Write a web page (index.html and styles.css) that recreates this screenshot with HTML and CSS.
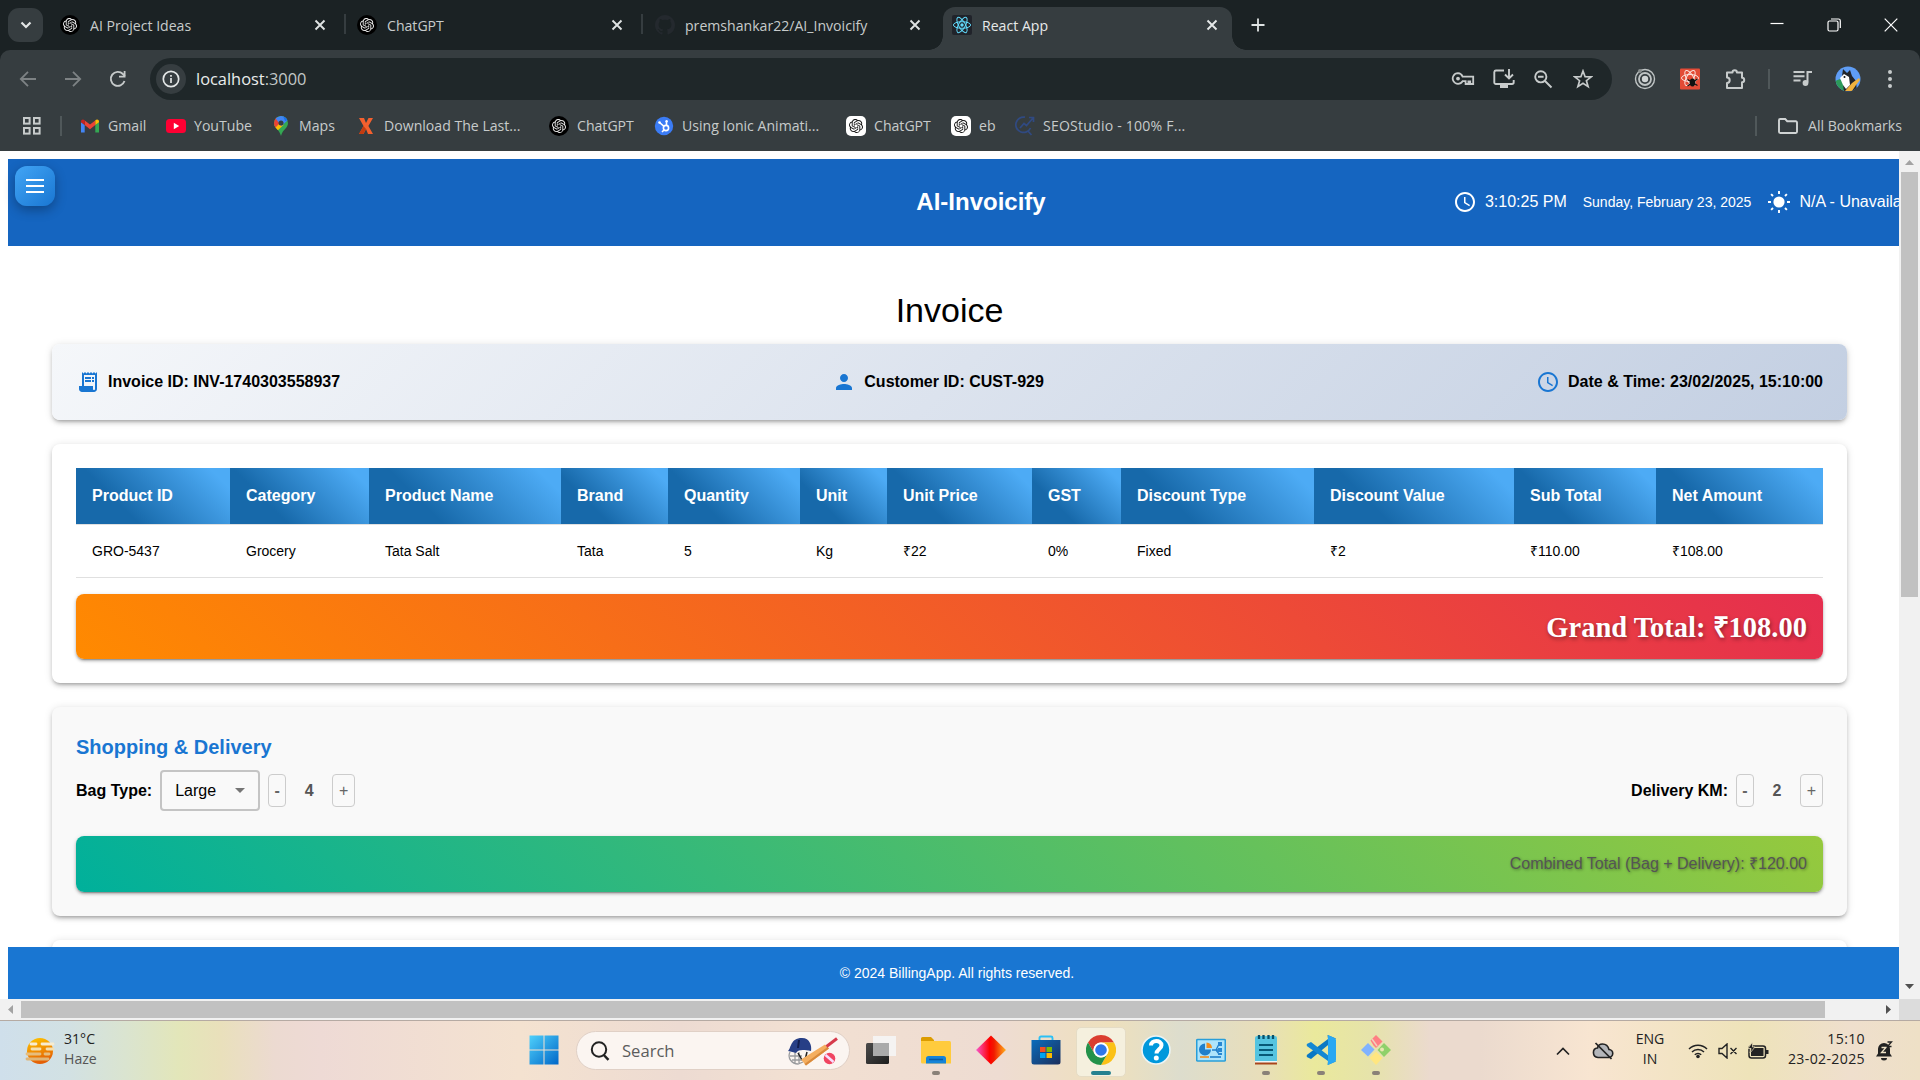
FILE: index.html
```html
<!DOCTYPE html>
<html lang="en">
<head>
<meta charset="utf-8">
<title>React App</title>
<link rel="stylesheet" href="styles.css">
</head>
<body>
<svg class="sprite" width="0" height="0" aria-hidden="true">
  <defs>
    <symbol id="gpt" viewBox="0 0 24 24"><path d="M22.2819 9.8211a5.9847 5.9847 0 0 0-.5157-4.9108 6.0462 6.0462 0 0 0-6.5098-2.9A6.0651 6.0651 0 0 0 4.9807 4.1818a5.9847 5.9847 0 0 0-3.9977 2.9 6.0462 6.0462 0 0 0 .7427 7.0966 5.98 5.98 0 0 0 .511 4.9107 6.051 6.051 0 0 0 6.5146 2.9001A5.9847 5.9847 0 0 0 13.2599 24a6.0557 6.0557 0 0 0 5.7718-4.2058 5.9894 5.9894 0 0 0 3.9977-2.9001 6.0557 6.0557 0 0 0-.7475-7.0729zm-9.022 12.6081a4.4755 4.4755 0 0 1-2.8764-1.0408l.1419-.0804 4.7783-2.7582a.7948.7948 0 0 0 .3927-.6813v-6.7369l2.02 1.1686a.071.071 0 0 1 .038.052v5.5826a4.504 4.504 0 0 1-4.4945 4.4944zm-9.6607-4.1254a4.4708 4.4708 0 0 1-.5346-3.0137l.142.0852 4.783 2.7582a.7712.7712 0 0 0 .7806 0l5.8428-3.3685v2.3324a.0804.0804 0 0 1-.0332.0615L9.74 19.9502a4.4992 4.4992 0 0 1-6.1408-1.6464zM2.3408 7.8956a4.485 4.485 0 0 1 2.3655-1.9728V11.6a.7664.7664 0 0 0 .3879.6765l5.8144 3.3543-2.0201 1.1685a.0757.0757 0 0 1-.071 0l-4.8303-2.7865A4.504 4.504 0 0 1 2.3408 7.872zm16.5963 3.8558L13.1038 8.364 15.1192 7.2a.0757.0757 0 0 1 .071 0l4.8303 2.7913a4.4944 4.4944 0 0 1-.6765 8.1042v-5.6772a.79.79 0 0 0-.407-.667zm2.0107-3.0231l-.142-.0852-4.7735-2.7818a.7759.7759 0 0 0-.7854 0L9.409 9.2297V6.8974a.0662.0662 0 0 1 .0284-.0615l4.8303-2.7866a4.4992 4.4992 0 0 1 6.6802 4.66zM8.3065 12.863l-2.02-1.1638a.0804.0804 0 0 1-.038-.0567V6.0742a4.4992 4.4992 0 0 1 7.3757-3.4537l-.142.0805L8.704 5.459a.7948.7948 0 0 0-.3927.6813zm1.0976-2.3654l2.602-1.4998 2.6069 1.4998v2.9994l-2.5974 1.4997-2.6067-1.4997Z"/></symbol>
    <symbol id="gpt-dark" viewBox="0 0 20 20"><circle cx="10" cy="10" r="10" fill="#000"/><use href="#gpt" x="3" y="3" width="14" height="14" fill="#eee"/></symbol>
    <symbol id="gpt-light" viewBox="0 0 20 20"><rect width="20" height="20" rx="5" fill="#fff"/><use href="#gpt" x="3" y="3" width="14" height="14" fill="#111"/></symbol>
    <symbol id="close" viewBox="0 0 12 12"><path d="M1.5 1.5l9 9M10.5 1.5l-9 9" stroke="currentColor" stroke-width="1.9" fill="none"/></symbol>
    <symbol id="clock" viewBox="0 0 24 24"><path fill="currentColor" d="M11.99 2C6.47 2 2 6.48 2 12s4.47 10 9.99 10C17.52 22 22 17.52 22 12S17.52 2 11.99 2zM12 20c-4.42 0-8-3.58-8-8s3.58-8 8-8 8 3.58 8 8-3.58 8-8 8zm.5-13H11v6l5.25 3.15.75-1.23-4.5-2.67z"/></symbol>
  </defs>
</svg>

<div class="browser">
  <div class="tabstrip">
    <button class="tab-search"><svg width="14" height="14" viewBox="0 0 14 14"><path d="M2.500 4.500l4.500 4.500 4.500-4.500" fill="none" stroke="#e3e6e6" stroke-width="2.200"/></svg></button>
    <div class="tab"><svg width="20" height="20"><use href="#gpt-dark"/></svg><span class="tab-title">AI Project Ideas</span><svg class="tab-close" width="12" height="12"><use href="#close"/></svg></div>
    <div class="tab ruled"><svg width="20" height="20"><use href="#gpt-dark"/></svg><span class="tab-title">ChatGPT</span><svg class="tab-close" width="12" height="12"><use href="#close"/></svg></div>
    <div class="tab ruled github"><svg width="20" height="20" viewBox="0 0 16 16"><path fill="#24292e" d="M8 0C3.58 0 0 3.58 0 8c0 3.54 2.29 6.53 5.47 7.59.4.07.55-.17.55-.38 0-.19-.01-.82-.01-1.49-2.01.37-2.53-.49-2.69-.94-.09-.23-.48-.94-.82-1.13-.28-.15-.68-.52-.01-.53.63-.01 1.08.58 1.23.82.72 1.21 1.87.87 2.33.66.07-.52.28-.87.51-1.07-1.78-.2-3.64-.89-3.64-3.95 0-.87.31-1.59.82-2.15-.08-.2-.36-1.02.08-2.12 0 0 .67-.21 2.2.82.64-.18 1.32-.27 2-.27s1.36.09 2 .27c1.53-1.04 2.2-.82 2.2-.82.44 1.1.16 1.92.08 2.12.51.56.82 1.27.82 2.15 0 3.07-1.87 3.75-3.65 3.95.29.25.54.73.54 1.48 0 1.07-.01 1.93-.01 2.2 0 .21.15.46.55.38A8.01 8.01 0 0 0 16 8c0-4.42-3.58-8-8-8z"/></svg><span class="tab-title">premshankar22/AI_Invoicify</span><svg class="tab-close" width="12" height="12"><use href="#close"/></svg></div>
    <div class="tab active"><svg width="20" height="20" viewBox="0 0 20 20"><rect width="20" height="20" rx="2" fill="#20232a"/><g fill="none" stroke="#61dafb" stroke-width="1"><ellipse cx="10" cy="10" rx="8.600" ry="3.300"/><ellipse cx="10" cy="10" rx="8.600" ry="3.300" transform="rotate(60 10 10)"/><ellipse cx="10" cy="10" rx="8.600" ry="3.300" transform="rotate(120 10 10)"/></g><circle cx="10" cy="10" r="1.700" fill="#61dafb"/></svg><span class="tab-title">React App</span><svg class="tab-close" width="12" height="12"><use href="#close"/></svg></div>
    <svg class="new-tab" width="14" height="14" viewBox="0 0 14 14"><path d="M7 .5v13M.5 7h13" stroke="#dfe3e3" stroke-width="1.800"/></svg>
    <div class="window-controls">
      <svg width="14" height="14" viewBox="0 0 14 14"><path d="M.5 5.500h13" stroke="#fff" stroke-width="1.200"/></svg>
      <svg width="14" height="14" viewBox="0 0 14 14"><rect x="1" y="3" width="10" height="10" rx="1.500" fill="none" stroke="#fff" stroke-width="1.200"/><path d="M4 1h7.500a1.800 1.800 0 0 1 1.800 1.800V10" fill="none" stroke="#fff" stroke-width="1.200"/></svg>
      <svg width="14" height="14" viewBox="0 0 14 14"><path d="M.7.7l12.600 12.600M13.300.7L.7 13.300" stroke="#fff" stroke-width="1.200"/></svg>
    </div>
  </div>

  <div class="toolbar">
    <svg class="dim" width="18" height="18" viewBox="0 0 18 18"><path d="M17 9H2M9 1.800L1.800 9 9 16.200" fill="none" stroke="currentColor" stroke-width="1.800"/></svg>
    <svg class="dim" width="18" height="18" viewBox="0 0 18 18"><path d="M1 9h15M9 1.800L16.200 9 9 16.200" fill="none" stroke="currentColor" stroke-width="1.800"/></svg>
    <svg width="18" height="18" viewBox="0 0 18 18"><path d="M15.500 11a7 7 0 1 1-1.600-7l2 2" fill="none" stroke="currentColor" stroke-width="1.900"/><path d="M16.500 1v6.500H10V5.700h4.700V1z" fill="currentColor"/></svg>
    <div class="omnibox">
      <span class="site-info"><svg width="18" height="18" viewBox="0 0 18 18"><circle cx="9" cy="9" r="7.700" fill="none" stroke="currentColor" stroke-width="1.700"/><path d="M9 8v5M9 5v1.700" stroke="currentColor" stroke-width="1.700"/></svg></span>
      <span class="url">localhost<span class="port">:3000</span></span>
      <span class="omni-icons">
        <svg width="24" height="16" viewBox="0 0 24 16"><path d="M7 2.200a5.300 5.300 0 1 0 4.600 8h3v2.800h2.800v-2.600h1.800V13h3V5.600H11.600A5.300 5.300 0 0 0 7 2.200z" fill="none" stroke="currentColor" stroke-width="1.800"/><circle cx="7" cy="7.600" r="1.900" fill="currentColor"/></svg>
        <svg width="24" height="22" viewBox="0 0 24 22"><path d="M12 2.500H4A1.700 1.700 0 0 0 2.300 4v10.500A1.500 1.500 0 0 0 4 16h16a1.700 1.700 0 0 0 1.700-1.700V12" fill="none" stroke="currentColor" stroke-width="1.900"/><path d="M8 16h8v4H8z" fill="currentColor"/><path d="M17 1v9M13 6.500l4 4 4-4" fill="none" stroke="currentColor" stroke-width="1.900"/></svg>
        <svg class="zoom-out" width="20" height="20" viewBox="0 0 20 20"><circle cx="7.800" cy="7.800" r="5.600" fill="none" stroke="currentColor" stroke-width="1.900"/><path d="M12 12l6.500 6.500M5 7.800h5.600" stroke="currentColor" stroke-width="1.900"/></svg>
        <svg width="20" height="20" viewBox="0 0 20 20"><path d="M10 2l2.100 5.700 6 .2-4.700 3.800 1.700 5.900L10 14.200l-5.100 3.400 1.700-5.900L1.900 7.900l6-.2z" fill="none" stroke="currentColor" stroke-width="1.700"/></svg>
      </span>
    </div>
    <div class="extensions">
      <svg width="22" height="22" viewBox="0 0 22 22"><g fill="none" stroke="#bfc4c4"><circle cx="11" cy="11" r="9.500" stroke-width="1.400"/><circle cx="11" cy="11" r="6" stroke-width="1.800"/></g><circle cx="11" cy="11" r="3.200" fill="#d0d4d4"/><circle cx="6" cy="3" r="2" fill="#8a8f8f"/></svg>
      <svg width="22" height="22" viewBox="0 0 22 22"><rect x="1" y=".5" width="20" height="21" rx="1" fill="#e34b36"/><g fill="none" stroke="#fbe3df" stroke-width="1"><ellipse cx="11" cy="10" rx="8.500" ry="3.500"/><ellipse cx="11" cy="10" rx="8.500" ry="3.500" transform="rotate(60 11 10)"/><ellipse cx="11" cy="10" rx="8.500" ry="3.500" transform="rotate(120 11 10)"/></g><ellipse cx="13.500" cy="14.500" rx="2.800" ry="4" fill="#111"/><path d="M8.500 11.500l10 6M18.500 11l-10 7" stroke="#111" stroke-width="1.200"/></svg>
      <svg width="22" height="22" viewBox="0 0 22 22"><path d="M3 4.500h5.500a2.200 2.200 0 0 1 4.400 0H18v5.300a2.200 2.200 0 0 1 0 4.400V20H3v-5a2.700 2.700 0 0 0 0-5.400z" fill="none" stroke="currentColor" stroke-width="2" stroke-linejoin="round"/></svg>
      <span class="rule"></span>
      <svg width="22" height="20" viewBox="0 0 22 20"><path d="M1.500 3h11M1.500 7.300h11M1.500 11.600h7" stroke="currentColor" stroke-width="2"/><path d="M20 3h-4.500v10.500" fill="none" stroke="currentColor" stroke-width="2"/><circle cx="13.500" cy="14" r="2.900" fill="currentColor"/></svg>
      <svg class="avatar" width="26" height="26" viewBox="0 0 26 26"><defs><clipPath id="av"><circle cx="13" cy="13" r="12.500"/></clipPath></defs><g clip-path="url(#av)"><path fill="#5f9df5" d="M0 0h26v26H0z"/><path fill="#2c9a5a" d="M0 15l5-2 4 4v9H0z"/><path fill="#23262b" d="M7 10l1-7 4 4 3-3 2 6 4 5 1 11H9z"/><path fill="#fff" d="M5 12l4-4 5 3 1 8-4 4-3-4z"/><path fill="#f0b23e" d="M24 12l-7 5-7 8h7l4-6 4-5z"/><circle cx="9.500" cy="11" r="1" fill="#111"/></g></svg>
      <svg width="6" height="20" viewBox="0 0 6 20"><g fill="currentColor"><circle cx="3" cy="3" r="2"/><circle cx="3" cy="10" r="2"/><circle cx="3" cy="17" r="2"/></g></svg>
    </div>
  </div>

  <div class="bookmarks">
    <svg class="apps" width="18" height="18" viewBox="0 0 18 18"><g fill="none" stroke="#c7cbcb" stroke-width="2"><rect x="1" y="1" width="5.600" height="5.600"/><rect x="11" y="1" width="5.600" height="5.600"/><rect x="1" y="11" width="5.600" height="5.600"/><rect x="11" y="11" width="5.600" height="5.600"/></g></svg>
    <span class="rule"></span>
    <div class="bookmark-list">
      <span class="bookmark"><svg width="20" height="20" viewBox="0 0 20 20"><path fill="#4285f4" d="M1 6v10.500h3.700V9z"/><path fill="#34a853" d="M19 6v10.500h-3.700V9z"/><path fill="#ea4335" d="M4.700 4.500L10 8.600l5.300-4.100V9L10 13.200 4.700 9z"/><path fill="#c5221f" d="M1 5.500C1 3.300 3.300 2.900 4.700 4.300V9L1 6.300z"/><path fill="#fbbc04" d="M19 5.500c0-2.200-2.300-2.600-3.700-1.200V9L19 6.300z"/></svg>Gmail</span>
      <span class="bookmark"><svg width="20" height="20" viewBox="0 0 20 20"><rect y="3" width="20" height="14" rx="3.500" fill="#f03"/><path fill="#fff" d="M7.800 6.800v6.400l5.400-3.200z"/></svg>YouTube</span>
      <span class="bookmark"><svg width="20" height="20" viewBox="0 0 20 20"><defs><clipPath id="pin"><path d="M10 0a7 7 0 0 0-7 7c0 5.500 5.300 6 7 13 1.700-7 7-7.500 7-13a7 7 0 0 0-7-7z"/></clipPath></defs><g clip-path="url(#pin)"><path fill="#34a853" d="M0 0h20v20H0z"/><path fill="#fbbc04" d="M0 13l8.500-9 4 5L5 16z"/><path fill="#ea4335" d="M0 0h5l5 6-8 8z"/><path fill="#4285f4" d="M4.500 2L9 0h5l3 4-6.500 6L5 3z"/><path fill="#1a73e8" d="M12 0h5v4l-3 1z"/></g><circle cx="10" cy="7" r="2.500" fill="#363d40"/></svg>Maps</span>
      <span class="bookmark"><svg width="20" height="20" viewBox="0 0 20 20"><path fill="#f4602e" d="M3 2h5l2 5 2.500-5H17l-4.600 8L17 18h-5l-2-5-2.500 5H3l4.500-8z"/><path fill="#c23b10" d="M7.500 10L3 18h4.500l2.500-5z"/></svg>Download The Last...</span>
      <span class="bookmark"><svg width="20" height="20"><use href="#gpt-dark"/></svg>ChatGPT</span>
      <span class="bookmark"><svg width="20" height="20" viewBox="0 0 20 20"><circle cx="10" cy="10" r="9.200" fill="#3b7cf5"/><g fill="none" stroke="#fff" stroke-width="1.600"><circle cx="12" cy="12" r="2.600"/><path d="M12.500 9V5.500M10 10.300L5.500 6.500M10 14l-2 2"/></g><circle cx="5.500" cy="6.500" r="1.300" fill="#fff"/><circle cx="12.600" cy="5.300" r="1.200" fill="#fff"/></svg>Using Ionic Animati...</span>
      <span class="bookmark"><svg width="20" height="20"><use href="#gpt-light"/></svg>ChatGPT</span>
      <span class="bookmark"><svg width="20" height="20"><use href="#gpt-light"/></svg>eb</span>
      <span class="bookmark seo"><svg width="20" height="20" viewBox="0 0 20 20"><g fill="none" stroke="#304a82" stroke-width="1.700"><path d="M10 1.200A7.700 7.700 0 1 0 15.500 12M12.500 14.500l4 4.500M5 12l4-4.500 2.500 2L18 2M14 1.500h4.500V6"/></g></svg>SEOStudio - 100% F...</span>
    </div>
    <span class="rule end"></span>
    <span class="bookmark all"><svg width="22" height="20" viewBox="0 0 22 20"><path d="M2 4.200A1.200 1.200 0 0 1 3.200 3h5l2 2.200h8.600A1.200 1.200 0 0 1 20 6.400v9.400a1.200 1.200 0 0 1-1.200 1.200H3.200A1.200 1.200 0 0 1 2 15.800z" fill="none" stroke="#d0d4d4" stroke-width="1.900"/></svg>All Bookmarks</span>
  </div>
</div>

<div class="viewport">
  <div class="page">
    <button class="menu-button"><svg width="18" height="14" viewBox="0 0 18 14"><path d="M0 1h18M0 7h18M0 13h18" stroke="#fff" stroke-width="2"/></svg></button>
    <div class="scroll-area">
      <header class="app-header">
        <h1 class="app-title">AI-Invoicify</h1>
        <div class="status">
          <svg width="24" height="24"><use href="#clock"/></svg>
          <span class="time">3:10:25 PM</span>
          <span class="date">Sunday, February 23, 2025</span>
          <svg width="24" height="24" viewBox="0 0 24 24"><circle cx="12" cy="12" r="5.600" fill="#fff"/><g stroke="#fff" stroke-width="1.900"><path d="M12 1v3M12 20v3M1 12h3M20 12h3M4.100 4.100l1.900 1.900M18 18l1.900 1.900M4.100 19.900L6 18M18 6l1.900-1.900"/></g></svg>
          <span class="weather">N/A - Unavailable</span>
        </div>
      </header>
      <main class="content">
        <h2 class="page-title">Invoice</h2>

        <section class="card meta">
          <span class="meta-item"><svg width="24" height="24" viewBox="0 0 24 24"><path fill="currentColor" d="M19.500 3.500L18 2l-1.500 1.500L15 2l-1.500 1.500L12 2l-1.500 1.500L9 2 7.500 3.500 6 2v14H3v3c0 1.660 1.340 3 3 3h12c1.660 0 3-1.340 3-3V2l-1.500 1.500zM19 19c0 .55-.45 1-1 1s-1-.45-1-1v-3H8V5h11v14z"/><path fill="currentColor" d="M9 7h6v2H9zM16 7h2v2h-2zM9 10h6v2H9zM16 10h2v2h-2z"/></svg>Invoice ID: INV-1740303558937</span>
          <span class="meta-item"><svg width="24" height="24" viewBox="0 0 24 24"><path fill="currentColor" d="M12 12c2.210 0 4-1.790 4-4s-1.790-4-4-4-4 1.790-4 4 1.790 4 4 4zm0 2c-2.670 0-8 1.340-8 4v2h16v-2c0-2.660-5.330-4-8-4z"/></svg>Customer ID: CUST-929</span>
          <span class="meta-item"><svg width="24" height="24"><use href="#clock"/></svg>Date &amp; Time: 23/02/2025, 15:10:00</span>
        </section>

        <section class="card products">
          <table>
            <thead><tr><th>Product ID</th><th>Category</th><th>Product Name</th><th>Brand</th><th>Quantity</th><th>Unit</th><th>Unit Price</th><th>GST</th><th>Discount Type</th><th>Discount Value</th><th>Sub Total</th><th>Net Amount</th></tr></thead>
            <tbody><tr><td>GRO-5437</td><td>Grocery</td><td>Tata Salt</td><td>Tata</td><td>5</td><td>Kg</td><td>₹22</td><td>0%</td><td>Fixed</td><td>₹2</td><td>₹110.00</td><td>₹108.00</td></tr></tbody>
          </table>
          <div class="banner grand-total">Grand Total: ₹108.00</div>
        </section>

        <section class="card delivery">
          <h3 class="section-title">Shopping &amp; Delivery</h3>
          <div class="controls">
            <div class="control-group">
              <span class="label">Bag Type:</span>
              <span class="select">Large<svg width="10" height="5" viewBox="0 0 10 5"><path d="M0 0h10L5 5z" fill="#757575"/></svg></span>
              <button class="step minus">-</button><span class="count">4</span><button class="step plus">+</button>
            </div>
            <div class="control-group">
              <span class="label">Delivery KM:</span>
              <button class="step minus">-</button><span class="count">2</span><button class="step plus">+</button>
            </div>
          </div>
          <div class="banner combined-total">Combined Total (Bag + Delivery): ₹120.00</div>
        </section>

        <section class="card next"></section>
      </main>
    </div>
    <footer class="app-footer">© 2024 BillingApp. All rights reserved.</footer>
  </div>
  <div class="vscroll">
    <svg width="9" height="5" viewBox="0 0 9 5"><path d="M0 5h9L4.500 0z" fill="#a3a3a3"/></svg>
    <span class="thumb"></span>
    <svg width="9" height="5" viewBox="0 0 9 5"><path d="M0 0h9L4.500 5z" fill="#505050"/></svg>
  </div>
  <div class="hscroll">
    <svg width="5" height="9" viewBox="0 0 5 9"><path d="M5 0v9L0 4.500z" fill="#a3a3a3"/></svg>
    <span class="thumb"></span>
    <svg width="5" height="9" viewBox="0 0 5 9"><path d="M0 0v9l5-4.500z" fill="#505050"/></svg>
  </div>
  <div class="corner"></div>
</div>

<div class="taskbar">
  <div class="weather-widget">
    <svg width="30" height="28" viewBox="0 0 30 28"><defs><linearGradient id="hz" x1="0" y1="0" x2=".3" y2="1"><stop offset="0" stop-color="#ffc800"/><stop offset="1" stop-color="#e45f06"/></linearGradient></defs><circle cx="15" cy="14" r="13" fill="url(#hz)"/><g stroke-width="2.800" stroke-linecap="round"><path d="M6 7h5M17 7h11" stroke="#f8ecd0"/><path d="M7 12h8M22 12h6" stroke="#f5dfae"/><path d="M2 17h13M20 17h4" stroke="#e6bd7e"/><path d="M2 22h21" stroke="#e0b577"/></g></svg>
    <span class="two-line"><span>31°C</span><span class="muted">Haze</span></span>
  </div>
  <div class="apps-row">
    <span class="app"><svg width="30" height="30" viewBox="0 0 30 30"><defs><linearGradient id="wn" x1="0" y1="0" x2="1" y2="1"><stop offset="0" stop-color="#4fd0fb"/><stop offset="1" stop-color="#0067c8"/></linearGradient></defs><path fill="url(#wn)" d="M.5.5h14v14H.5zM15.500.5h14v14h-14zM.5 15.500h14v14H.5zM15.500 15.500h14v14h-14z"/></svg></span>
    <div class="search">
      <svg width="20" height="20" viewBox="0 0 20 20"><circle cx="9" cy="8.500" r="7.200" fill="none" stroke="#222" stroke-width="2"/><path d="M13.800 14l4.700 4.800" stroke="#222" stroke-width="2.500"/></svg>
      <span>Search</span>
      <svg class="cricket" width="52" height="32" viewBox="0 0 52 32"><g fill="none" stroke="#999b9e" stroke-width="1.300"><path d="M3 17c-3 6 2 12 8 12l5-2M3 21h12M5 25h10M8 17v11M12 17v11"/></g><path fill="#273f86" d="M1 16C4 14 3 3 15 3c8 0 10 8 9 13-7-1-12-2-15 2-2-1-5-1-8-2z"/><path d="M12 5l-1 8" stroke="#111d4d" stroke-width="2"/><path d="M20 17l-2 8M11 18l4 7" stroke="#222" stroke-width="1.500"/><path d="M19 30.500l-5-6L38 9.500l4 4z" fill="#f4ae60"/><path d="M17.500 29L40.500 12l1.500 1.500-23 17z" fill="#d98a3c"/><path d="M39.500 11.500L50 3.500" stroke="#d63a4b" stroke-width="3"/><circle cx="42.500" cy="23.500" r="5.800" fill="#f04561"/><path d="M38.500 20l8 7" stroke="#f7dfff" stroke-width="2.500"/></svg>
    </div>
    <span class="app"><svg width="30" height="30" viewBox="0 0 30 30"><defs><linearGradient id="tv" x1="0" y1="0" x2="1" y2="1"><stop offset="0" stop-color="#4b4b4b"/><stop offset="1" stop-color="#1e1e1e"/></linearGradient></defs><rect y="8" width="23" height="21" rx="1.500" fill="url(#tv)"/><path d="M7 1h23v20H7z" fill="#f5f5f5" opacity=".9"/><path d="M7 8h16v13H7z" fill="#aaa"/></svg></span>
    <span class="app running"><svg width="30" height="30" viewBox="0 0 30 30"><path d="M0 3.500A1.500 1.500 0 0 1 1.500 2H10l3 3v4H0z" fill="#dc9c00"/><path d="M0 6h28.500A1.500 1.500 0 0 1 30 7.500V28.500H1.500A1.500 1.500 0 0 1 0 27z" fill="#ffcb3d"/><path d="M5 28.500v-5A2.500 2.500 0 0 1 7.500 21h15a2.500 2.500 0 0 1 2.500 2.500v5z" fill="#1684d8"/><path d="M8 24.500h14" stroke="#0b5aa2" stroke-width="1.500"/></svg></span>
    <span class="app"><svg width="30" height="30" viewBox="0 0 30 30"><defs><linearGradient id="dm"><stop offset="0" stop-color="#f65bd0"/><stop offset=".45" stop-color="#f00"/><stop offset=".6" stop-color="#f11b00"/><stop offset="1" stop-color="#ffb11c"/></linearGradient></defs><path d="M15 .5L30 15 15 29.500 0 15z" fill="url(#dm)"/></svg></span>
    <span class="app"><svg width="30" height="30" viewBox="0 0 30 30"><defs><linearGradient id="st" x1="0" y1="0" x2="1" y2="1"><stop offset="0" stop-color="#0b6dbd"/><stop offset="1" stop-color="#1c2f5c"/></linearGradient></defs><path d="M8.500 7V3A1.500 1.500 0 0 1 10 1.500h10A1.500 1.500 0 0 1 21.500 3v4" fill="none" stroke="#2cc0f5" stroke-width="1.900"/><path d="M.5 5h29v22a2.500 2.500 0 0 1-2.500 2.500H3A2.500 2.500 0 0 1 .5 27z" fill="url(#st)"/><path fill="#f25022" d="M9 12h5.500v5H9z"/><path fill="#7fba00" d="M15.500 12H21v5h-5.500z"/><path fill="#00a4ef" d="M9 18h5.500v5H9z"/><path fill="#ffb900" d="M15.500 18H21v5h-5.500z"/></svg></span>
    <span class="app current"><svg width="30" height="30" viewBox="0 0 48 48"><path fill="#db3d2f" d="M24 0a24 24 0 0 1 20.800 12H24a12 12 0 0 0-10.400 18L3.200 12A24 24 0 0 1 24 0z"/><path fill="#fbc116" d="M44.800 12A24 24 0 0 1 24 48l10.400-18A12 12 0 0 0 24 12z"/><path fill="#23924a" d="M3.200 12A24 24 0 0 0 24 48l10.400-18a12 12 0 0 1-20.800 0z"/><circle cx="24" cy="24" r="12" fill="#fff"/><circle cx="24" cy="24" r="9.300" fill="#2f77ea"/></svg></span>
    <span class="app"><svg width="30" height="30" viewBox="0 0 30 30"><circle cx="15" cy="15" r="14" fill="#0098dc" stroke="#ecf4f5" stroke-width="1.600"/><path d="M10 10.500c0-6 10.500-6 10.500-.2 0 4-5 4-5 8.200" fill="none" stroke="#fff" stroke-width="4"/><circle cx="15.300" cy="23" r="2.500" fill="#fff"/></svg></span>
    <span class="app"><svg width="30" height="30" viewBox="0 0 30 30"><rect x=".7" y="4.500" width="28.600" height="21.500" rx="1" fill="#aee4fb" stroke="#299ed9" stroke-width="1.600"/><path d="M9 8.500a6 6 0 1 0 6 6H9z" fill="#1f7fcb"/><path d="M10.500 7.500v5.500H16a5.500 5.500 0 0 0-5.500-5.500z" fill="#f28c1c"/><path d="M16 15h4l3-6M20 15l4 0M20 15l3 4" fill="none" stroke="#1f7fcb" stroke-width="1.300"/><path d="M22 7h4v4h-4zM22 13h4v4h-4zM22 18h4v2h-4z" fill="#2887d2"/><path d="M4 22h9" stroke="#f28c1c" stroke-width="1.600"/><path d="M14 22h11" stroke="#1f7fcb" stroke-width="1.600"/></svg></span>
    <span class="app running"><svg width="30" height="30" viewBox="0 0 30 30"><path fill="#a8461a" d="M4 26h22v3.500H4z"/><path fill="#eef5f6" d="M4 24h22v3.500H4z"/><path fill="#55c4e0" d="M4 3a2 2 0 0 1 2-2h18a2 2 0 0 1 2 2v23H4z"/><path d="M8 10h14M8 15h14M8 20h14" stroke="#075a78" stroke-width="1.900"/><path d="M8 0v4M12.500 0v4M17.500 0v4M22 0v4" stroke="#07506b" stroke-width="2.300"/></svg></span>
    <span class="app running"><svg width="30" height="30" viewBox="0 0 30 30"><path fill="#0a78c4" d="M21.500 0L30 3.500 5 24 .8 22v-2L22 4z"/><path fill="#1588d3" d="M21.500 30L30 26.500 5 7 .8 9v2L22 26z"/><path fill="#29a8f2" d="M22 0l6.500 3A2.500 2.500 0 0 1 30 5.300v19.400a2.500 2.500 0 0 1-1.500 2.300L22 30z"/></svg></span>
    <span class="app running"><svg width="30" height="30" viewBox="0 0 30 30"><path fill="#ff7f83" d="M15 0l6.500 6.500L15 13l-2.500-2.500-3-5z"/><path fill="#80b3ff" d="M7 8l6.500 6.500L7 21.500 0 15z"/><path fill="#8fd16a" d="M23 8l7 7-7 7-6.500-7z"/><path fill="#ffe680" d="M15 16.500l6.500 6.500L15 30l-6.500-7z"/><circle cx="21" cy="14.500" r="2" fill="#e9e7b0"/><path d="M11 4l5 7" stroke="#f1cfbc" stroke-width="1.500"/></svg></span>
  </div>
  <div class="tray">
    <svg class="chevron" width="14" height="10" viewBox="0 0 14 10"><path d="M1 8.500l6-6 6 6" fill="none" stroke="#222" stroke-width="1.700"/></svg>
    <svg class="cloud" width="22" height="18" viewBox="0 0 22 18"><path d="M6 15.500h10.500a4 4 0 0 0 .5-8C16 3.500 13 2 10.500 2 8 2 6 3.500 5.500 6 0 6.500 0 15 6 15.500z" fill="#b4b6ba" stroke="#222" stroke-width="1.600"/><path d="M3.500 1l16 16" stroke="#222" stroke-width="1.700"/></svg>
    <span class="two-line lang"><span>ENG</span><span>IN</span></span>
    <svg class="wifi" width="20" height="16" viewBox="0 0 20 16"><g fill="none" stroke="#222" stroke-width="1.500"><path d="M1 6a12.700 12.700 0 0 1 18 0M4 9a8.500 8.500 0 0 1 12 0M6.800 11.800a4.500 4.500 0 0 1 6.400 0"/></g><circle cx="10" cy="13.500" r="1.800" fill="#222"/></svg>
    <svg class="mute" width="20" height="16" viewBox="0 0 20 16"><path d="M1 5.500v5h3L9 15V1L4 5.500zM12.500 5l6 6M18.500 5l-6 6" fill="none" stroke="#222" stroke-width="1.400"/></svg>
    <svg class="battery" width="21" height="18" viewBox="0 0 21 18"><rect x="1" y="4" width="16.500" height="12" rx="2.500" fill="none" stroke="#222" stroke-width="1.500"/><rect x="3" y="6" width="12.500" height="8" fill="#222"/><path d="M18 8h2.500v4H18z" fill="#222"/><path d="M4.500 0L0 6.500h3l-1 4.500 5-6H4.500z" fill="#222" stroke="#f0e4be" stroke-width=".7"/></svg>
    <span class="two-line clock-text"><span>15:10</span><span>23-02-2025</span></span>
    <svg class="bell" width="18" height="20" viewBox="0 0 18 20"><path d="M1 15.500l2-3V8a6 6 0 0 1 12 0v4.500l2 3zM6 17h6a3 2.500 0 0 1-6 0z" fill="#222"/><path d="M6.500 6.500h4.500l-4.500 5h4.500" fill="none" stroke="#efe3c8" stroke-width="1.300"/><path d="M12.500 1h4l-4 4.500h4" fill="none" stroke="#222" stroke-width="1.300"/></svg>
  </div>
</div>
</body>
</html>
```

FILE: styles.css
```css
* { box-sizing: border-box; }

body {
  margin: 0;
  width: 1920px;
  height: 1080px;
  overflow: hidden;
  display: flex;
  flex-direction: column;
  background: #fff;
  font-family: "Liberation Sans", Arial, sans-serif;
  color: #000;
}

svg { display: block; flex: none; }
h1, h2, h3 { margin: 0; }
button { font: inherit; padding: 0; }
.sprite { position: absolute; }

/* Browser frame */
.browser {
  flex: none;
  height: 151px;
  background: #1b2224;
  color: #c7cbcb;
  font-family: "Open Sans", "Noto Sans", sans-serif;
  font-size: 14.1px;
  white-space: nowrap;
}
.tabstrip { display: flex; height: 50px; padding-left: 8px; }
.tab-search {
  width: 35px; height: 34px; margin: 8px 5px 0 0;
  border: 0; border-radius: 11px; background: #363d40;
  display: flex; align-items: center; justify-content: center;
}
.tab {
  width: 297px; height: 50px; padding: 0 19px 0 12px;
  display: flex; align-items: center; position: relative;
}
.tab-title { flex: 1; margin-left: 10px; color: #c7cbcb; }
.tab-close { color: #dfe3e3; }
.ruled::before {
  content: ""; position: absolute; left: -1px; top: 14px;
  width: 2px; height: 20px; background: #363d40;
}
.github { width: 298px; padding-left: 13px; }
.tab.active {
  width: 289px; height: 43px; margin: 7px 0 0 3px; padding: 0 14px 7px 9px;
  background: #363d40; border-radius: 12px 12px 0 0;
}
.tab.active::before, .tab.active::after {
  content: ""; position: absolute; bottom: 0; width: 14px; height: 14px;
}
.tab.active::before { left: -14px; background: radial-gradient(circle at 0 0, transparent 13.5px, #363d40 14px); }
.tab.active::after { right: -14px; background: radial-gradient(circle at 100% 0, transparent 13.5px, #363d40 14px); }
.tab.active .tab-title, .tab.active .tab-close { color: #e6e9e9; }
.new-tab { margin: 18px 0 0 19px; }
.window-controls { margin: 18px 22px 0 auto; display: flex; gap: 43px; }

.toolbar {
  display: flex; align-items: center; height: 58px; padding: 0 24px 0 19px;
  background: #363d40; border-radius: 10px 10px 0 0; color: #c7cbcb;
}
.toolbar > svg { margin-right: 27px; }
.toolbar .dim { color: #7d8284; }
.omnibox {
  width: 1462px; height: 42px; margin-left: -4px; padding: 0 19px 0 6px;
  display: flex; align-items: center; border-radius: 21px; background: #1f2729;
}
.site-info {
  width: 30px; height: 30px; border-radius: 50%; background: #363d40; color: #e3e6e6;
  display: flex; align-items: center; justify-content: center;
}
.url { margin-left: 10px; font-size: 16.4px; line-height: 20px; padding-bottom: 1px; color: #e9ecec; }
.port { color: #c2c7c7; }
.omni-icons { margin-left: auto; display: flex; align-items: center; gap: 17px; }
.zoom-out { margin-right: 3px; }
.extensions { flex: 1; display: flex; align-items: center; margin-left: 22px; gap: 23px; }
.extensions .rule { margin: 0 -1px; }
.avatar { margin: 0 3px 0 -2px; }
.rule { width: 2px; height: 20px; background: #50585a; }

.bookmarks {
  display: flex; align-items: center; height: 43px; padding: 0 18px 8px 23px;
  background: #363d40;
}
.bookmarks > .rule { margin: 0 18px 0 19px; }
.bookmarks > .rule.end { margin: 0 20px 0 auto; }
.bookmark-list { display: grid; grid-template-columns: 86px 105px 85px 193px 105px 192px 105px 64px auto; }
.bookmark { display: flex; align-items: center; gap: 8px; }
.bookmark.all { gap: 9px; }
.seo { letter-spacing: .2px; }

/* Page viewport */
.viewport {
  flex: none; height: 869px;
  display: grid; grid-template: 848px 21px / 1899px 21px;
}
.page { position: relative; padding-left: 8px; display: flex; flex-direction: column; overflow: hidden; }
.scroll-area { flex: 1; min-height: 0; margin-left: -8px; padding: 8px 0 0 8px; overflow: hidden; }
.menu-button {
  position: absolute; z-index: 2; left: 15px; top: 15px; width: 40px; height: 40px;
  border: 0; border-radius: 12px; background: linear-gradient(135deg, #42a5f5, #1976d2);
  box-shadow: 0 4px 12px rgba(0, 0, 0, .3);
  display: flex; align-items: center; justify-content: center;
}
.app-header {
  width: 1946px; height: 87px; padding-bottom: 2px; background: #1565c0; color: #fff;
  display: grid; grid-template-columns: minmax(0, 1fr) auto minmax(0, 1fr); align-items: center;
}
.app-title { grid-column: 2; font-size: 24px; }
.status { justify-self: end; display: flex; align-items: center; padding-right: 31px; white-space: nowrap; }
.time { margin: 0 16px 0 8px; }
.date { margin-right: 16px; font-size: 14px; }
.weather { margin-left: 8px; }

.content { padding: 42px 52px 0 44px; display: flex; flex-direction: column; }
.page-title { height: 56px; line-height: 44px; font-size: 34px; font-weight: 400; text-align: center; }
.card {
  padding: 24px; margin-bottom: 24px; border-radius: 8px; background: #fff;
  box-shadow: 0 3px 3px -2px rgba(0, 0, 0, .2), 0 3px 4px rgba(0, 0, 0, .14), 0 1px 8px rgba(0, 0, 0, .12);
}
.meta {
  height: 76px; display: flex; justify-content: space-between; align-items: center;
  background: linear-gradient(135deg, #f5f7fa, #c3cfe2); font-weight: 700;
}
.meta-item { display: flex; align-items: center; gap: 8px; }
.meta-item svg { color: #1976d2; }

.products { height: 239px; }
table { width: 1747px; table-layout: fixed; border-collapse: separate; border-spacing: 0; text-align: left; }
th, td { padding: 0 16px; border-bottom: 1px solid #e0e0e0; }
th { height: 57px; font-size: 16px; color: #fff; background: linear-gradient(45deg, #1769aa 30%, #4dabf5 90%); background-clip: padding-box; }
td { height: 53px; padding-bottom: 1px; font-size: 14px; }
th:nth-child(1) { width: 154px; }
th:nth-child(2) { width: 139px; }
th:nth-child(3) { width: 192px; }
th:nth-child(4) { width: 107px; }
th:nth-child(5) { width: 132px; }
th:nth-child(6) { width: 87px; }
th:nth-child(7) { width: 145px; }
th:nth-child(8) { width: 89px; }
th:nth-child(9) { width: 193px; }
th:nth-child(10) { width: 200px; }
th:nth-child(11) { width: 142px; }
th:nth-child(12) { width: 167px; }

.banner {
  display: flex; align-items: center; justify-content: flex-end; padding: 0 16px; border-radius: 8px;
  box-shadow: 0 2px 1px -1px rgba(0, 0, 0, .2), 0 2px 3px rgba(0, 0, 0, .24), 0 1px 5px rgba(0, 0, 0, .12);
}
.grand-total {
  height: 65px; margin-top: 16px; padding-bottom: 1px; background: linear-gradient(45deg, #ff8a00, #e52e4f);
  color: #fff; font: 700 28.5px "Liberation Serif", "Times New Roman", serif;
  text-shadow: 1px 2px 4px rgba(0, 0, 0, .4);
}
.delivery { height: 209px; background: #f9f9f9; }
.section-title { height: 39px; line-height: 33px; font-size: 20px; color: #1976d2; }
.controls { display: flex; justify-content: space-between; align-items: center; height: 41px; }
.control-group { display: flex; align-items: center; }
.label { font-weight: 700; margin-right: 8px; }
.select {
  width: 100px; height: 41px; margin-right: 8px; padding: 0 13px; border: 2px solid #c4c4c4; border-radius: 4px;
  display: flex; align-items: center; justify-content: space-between;
}
.step { height: 33px; border: 1px solid #ccc; border-radius: 4px; background: transparent; color: #666; }
.minus { width: 18px; font-weight: 700; }
.plus { width: 23px; }
.count { width: 46px; text-align: center; font-weight: 700; color: #555; }
.combined-total {
  height: 56px; margin-top: 25px; padding-bottom: 2px; background: linear-gradient(45deg, #00b09b, #96c93d);
  color: #555; text-shadow: 1px 1px 3px rgba(0, 0, 0, .4);
}
.next { height: 200px; margin: 0; }
.app-footer {
  flex: none; height: 52px; background: #1976d2; color: #fff; font-size: 14px;
  display: flex; align-items: center; justify-content: center; padding-left: 7px;
}

.vscroll { background: #f1f1f1; display: flex; flex-direction: column; align-items: center; padding: 9px 0 10px; }
.vscroll .thumb { width: 17px; height: 425px; margin: 7px 0 auto; background: #c1c1c1; }
.hscroll { background: #f1f1f1; display: flex; align-items: center; padding: 0 8px; }
.hscroll .thumb { width: 1804px; height: 17px; margin: 0 auto 0 8px; background: #c1c1c1; }
.corner { background: #dcdcdc; }

/* Windows taskbar */
.taskbar {
  flex: 1; display: flex; align-items: center; border-top: 1px solid #b5aaa3;
  font-family: "Open Sans", "Noto Sans", sans-serif; font-size: 14.1px; color: #222;
  background: linear-gradient(90deg, #cfdfeb 0, #d2e1e3 70px, #dae4d0 125px, #e3e6b9 180px, #e9e0bb 220px, #ecdad1 275px, #eedad5 320px, #f4e2d0 520px, #eddbd2 680px, #f2e0d2 800px, #eedcd2 1000px, #eee0bd 1110px, #ddddcd 1180px, #e8deba 1260px, #eae99c 1315px, #e6e3aa 1370px, #ebdace 1430px, #ebdace 1480px, #f8e5d1 1590px, #eee3b9 1750px, #efdfcd 1850px, #eee0c6 1920px);
}
.weather-widget { width: 509px; padding-left: 25px; display: flex; align-items: center; gap: 9px; }
.two-line { display: flex; flex-direction: column; line-height: 20px; padding-bottom: 3px; }
.muted { color: #555; }
.apps-row { display: flex; align-items: center; }
.app { position: relative; width: 55px; height: 48px; display: flex; align-items: center; justify-content: center; padding-bottom: 1px; }
.apps-row > .app:first-child { margin: 0 5px 0 7px; }
.search {
  width: 274px; height: 39px; margin-right: 3px; padding: 0 10px 0 13px; border-radius: 20px;
  display: flex; align-items: center; background: #fbf5f1; border: 1px solid #e0d0c6; font-size: 16.6px; color: #5c5c5c;
}
.search span { margin-left: 12px; }
.cricket { margin-left: auto; }
.current::before {
  content: ""; position: absolute; left: 3px; top: 0; width: 48px; height: 48px; border-radius: 5px;
  background: #f5f0de; border: 1px solid #e5dcc5;
}
.current svg { position: relative; }
.running::after, .current::after {
  content: ""; position: absolute; bottom: 0; width: 8px; height: 4px; border-radius: 2px; background: #8a8178;
}
.current::after { width: 20px; background: #26818f; }
.tray { flex: 1; display: flex; align-items: center; }
.chevron { margin-left: 153px; }
.cloud { margin-left: 22px; }
.lang { width: 40px; margin-left: 16px; align-items: center; text-align: center; }
.wifi { margin-left: 18px; }
.mute { margin-left: 10px; }
.battery { margin-left: 10px; }
.clock-text { width: 96px; text-align: right; letter-spacing: .35px; }
.bell { margin-left: 10px; }
```
